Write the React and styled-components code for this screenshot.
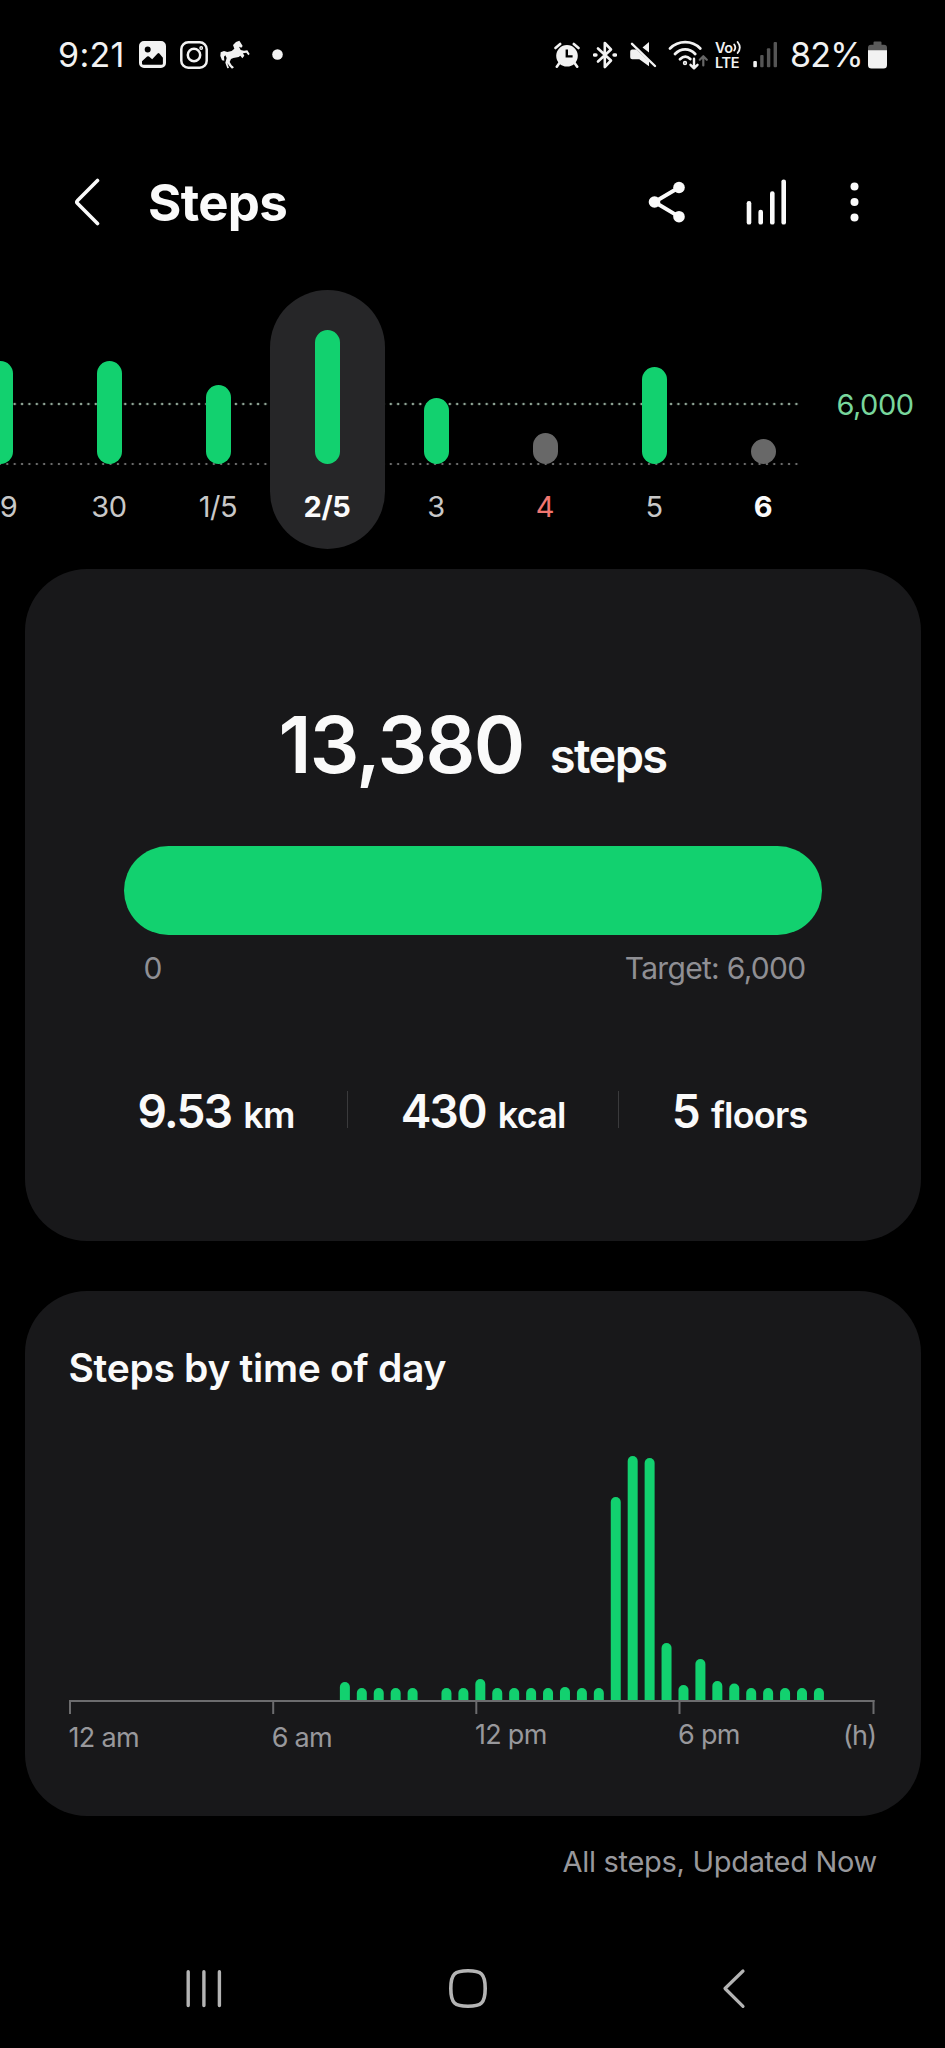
import React, { useState } from "react";
import styled, { createGlobalStyle } from "styled-components";

const GREEN = '#12d16f';

const DAYS = [
    { label: '29', height: 103 },
    { label: '30', height: 103 },
    { label: '1/5', height: 79 },
    { label: '2/5', height: 134.5 },
    { label: '3', height: 66.5 },
    { label: '4', height: 31, missed: true, holiday: true },
    { label: '5', height: 97 },
    { label: '6', height: 25, missed: true, today: true },
];

const STATS = [
    { value: '9.53', unit: 'km' },
    { value: '430', unit: 'kcal' },
    { value: '5', unit: 'floors' },
];

// one entry per half hour, starting at 8 am (slot 16)
const FIRST_SLOT = 16;
const SLOT_WIDTH = 16.93;
const SLOTS = [19, 13, 13, 13, 13, 0, 13, 13, 22, 13, 13, 13, 13, 14, 13, 13, 204, 245, 243, 58, 16, 42, 20, 17.5, 13, 13, 13, 13, 13];
const TICKS = [1, 204.2, 407.3, 610.5, 804.5];

function StatusBar() {
    return (
        <StatusContainer>
            <Clock>9:21</Clock>
            <Icon width="27" height="27" viewBox="0 0 27 27">
                <path fillRule="evenodd" d="M5 0H22a5 5 0 0 1 5 5V22a5 5 0 0 1-5 5H5a5 5 0 0 1-5-5V5a5 5 0 0 1 5-5ZM8.7 5.6a3 3 0 1 0 0 6 3 3 0 0 0 0-6ZM3 22.5a1.3 1.3 0 0 0 1.3 1.3H22.6a1.3 1.3 0 0 0 1.3-1.3V16.8L20.4 12.6a1.2 1.2 0 0 0-1.8 0L13.2 18.2 10 15.6a1.4 1.4 0 0 0-1.9 0L3 20.3Z" />
            </Icon>
            <Icon $left={14} width="28" height="28" viewBox="0 0 28 28" $line={2.5}>
                <rect x="1.3" y="1.3" width="25.4" height="25.4" rx="7" />
                <circle cx="14" cy="14" r="6.2" />
                <circle cx="21.2" cy="7" r="0.7" />
            </Icon>
            <Icon $left={12} width="30" height="30" viewBox="540 62 90 90">
                <path d="M598 64L602 70 608 80 604 85 597 82 602 92 612 94 622 93 629 104 625 108 619 100 609 102 613 109 607 117 601 109 596 113 580 116 573 119 569 128 575 138 582 144 576 148 568 140 562 131 567 146 562 147 556 130 560 116 556 108 552 112 553 124 546 123 541 110 542 99 552 95 562 98 575 95 583 88 579 77 588 68Z" />
            </Icon>
            <Icon $left={22} width="11" height="11" viewBox="0 0 11 11">
                <circle cx="5.5" cy="5.5" r="5.3" />
            </Icon>
            <StatusRight>
                <Icon width="26" height="26" viewBox="0 0 26 26">
                    <path fillRule="evenodd" d="M13 3a10.8 10.8 0 1 1 0 21.6A10.8 10.8 0 0 1 13 3ZM11.6 7.6V15.6H18.6V13.2H14V7.6Z" />
                    <path d="M5.8 20.5L2.8 24.7M20.2 20.5L23.2 24.7M1.5 6L6.2 2M24.5 6L19.8 2" stroke="#f2f2f2" strokeWidth="2.6" strokeLinecap="round" />
                </Icon>
                <Icon $left={13} width="24" height="28" viewBox="0 0 24 28" $line={2.6}>
                    <path d="M5 7.5L18 19.5 11.8 26V2L18 8.5 5 20.5" />
                    <path d="M1.5 14H3M21 14H22.5" strokeWidth="3.4" />
                </Icon>
                <Icon $left={12} width="28" height="27" viewBox="0 0 28 27">
                    <path d="M20 1V11.5L13.5 6.6ZM1.2 10.5a2 2 0 0 1 2-2H7.2L20 20.2V25.2L10.3 18.3H3.2a2 2 0 0 1-2-2Z" />
                    <path d="M3 2.8L26 25" stroke="#f2f2f2" strokeWidth="2.4" strokeLinecap="round" />
                </Icon>
                <Icon $left={11} width="40" height="30" viewBox="0 0 40 30" $line={2.8}>
                    <path d="M2 8.5C10.5 0 24 0 32.3 8.5M7 14C13 7.8 21.3 7.8 27.2 14M12 19.3C15.5 15.8 19 15.8 22.3 19" />
                    <circle cx="17" cy="23" r="0.8" />
                    <path d="M26 18.8V28M22.5 24.8L26 28.3 29.5 24.8" strokeWidth="2.4" />
                    <path d="M35.3 25.5V16.5M31.8 19.8L35.3 16.2 38.8 19.8" strokeWidth="2.2" stroke="#666" />
                </Icon>
                <Volte>
                    <div>
                        Vo
                        <Icon width="9" height="13" viewBox="0 0 9 13" $line={1.8}>
                            <path d="M1.2 3.4Q3.4 6.5 1.2 9.6M4.6 1Q9 6.5 4.6 12" />
                        </Icon>
                    </div>
                    <div>LTE</div>
                </Volte>
                <Icon $left={10} width="25" height="27" viewBox="0 0 25 27">
                    <rect x="0.3" y="20" width="3.6" height="6.3" rx="1" />
                    <g fill="#555">
                        <rect x="7.2" y="14" width="3.4" height="12.3" rx="1" />
                        <rect x="13.9" y="7.3" width="3.4" height="19" rx="1" />
                        <rect x="20.6" y="1" width="3.4" height="25.3" rx="1" />
                    </g>
                </Icon>
                <Battery>82%</Battery>
                <Icon width="19" height="28" viewBox="0 0 19 28">
                    <path d="M5.5 1.5Q5.5 .5 6.5 .5H12.5Q13.5 .5 13.5 1.5V3.8H16a3 3 0 0 1 3 3V10H0V6.8a3 3 0 0 1 3-3H5.5Z" fill="#5a5a5a" />
                    <path d="M0 9.3H19V24a3.5 3.5 0 0 1-3.5 3.5H3.5A3.5 3.5 0 0 1 0 24Z" />
                </Icon>
            </StatusRight>
        </StatusContainer>
    )
}

function WeekChart() {
    const [selected, setSelected] = useState('2/5');

    return (
        <WeekContainer>
            <WeekPlot>
                {DAYS.map((day) => (
                    <Day key={day.label} role='button' $selected={day.label === selected} onClick={() => setSelected(day.label)}>
                        <DayBarArea>
                            <DayBar $missed={day.missed} style={{ height: day.height }} />
                        </DayBarArea>
                        <DayLabel $holiday={day.holiday} $strong={day.today || day.label === selected}>{day.label}</DayLabel>
                    </Day>
                ))}
            </WeekPlot>
            <TargetLabel>6,000</TargetLabel>
        </WeekContainer>
    )
}

function DayChart() {
    return (
        <>
            <svg width="807" height="266" viewBox="0 0 807 266">
                {SLOTS.map((h, i) => h > 0 && (
                    <path
                        key={i}
                        d={`M${(FIRST_SLOT + i) * SLOT_WIDTH} 251V${256 - h}a5 5 0 0 1 10 0V251Z`}
                        fill={GREEN}
                    />
                ))}
                <rect x="0" y="250" width="805.5" height="2" fill="#6c6c6e" />
                {TICKS.map((x) => <rect key={x} x={x - 1} y="250" width="2" height="14" fill="#6c6c6e" />)}
            </svg>
            <HourLabels>
                <HourLabel $drop={2.5}>12 am</HourLabel>
                <HourLabel $drop={2.5}>6 am</HourLabel>
                <HourLabel>12 pm</HourLabel>
                <HourLabel>6 pm</HourLabel>
                <HourLabel $drop={1}>(h)</HourLabel>
            </HourLabels>
        </>
    )
}

function App() {
    return (
        <Screen>
            <GlobalStyle />
            <StatusBar />
            <Header>
                <Icon width="26" height="48" viewBox="0 0 26 48" $line={3.6}>
                    <path d="M23.5 2.5L3.6 22.4Q2 24 3.6 25.6L23.5 45.5" />
                </Icon>
                <Title>Steps</Title>
                <Icon width="38" height="42" viewBox="0 0 38 42">
                    <path d="M31 6.5L6.5 21 31 35.7" fill="none" stroke="#fafafa" strokeWidth="3.8" />
                    <circle cx="6.5" cy="21" r="5.8" />
                    <circle cx="31" cy="6.5" r="5.8" />
                    <circle cx="31" cy="35.7" r="5.8" />
                </Icon>
                <Icon $left={60} width="40" height="46" viewBox="0 0 40 46">
                    <rect x="0.7" y="22" width="4.6" height="23.6" rx="2.2" />
                    <rect x="12.4" y="30.7" width="4.6" height="14.9" rx="2.2" />
                    <rect x="24" y="12.3" width="4.6" height="33.3" rx="2.2" />
                    <rect x="35.4" y="0.4" width="4.6" height="45.2" rx="2.2" />
                </Icon>
                <Icon $left={64} width="9" height="42" viewBox="0 0 9 42">
                    <circle cx="4.5" cy="5.4" r="4" />
                    <circle cx="4.5" cy="21" r="4" />
                    <circle cx="4.5" cy="36.6" r="4" />
                </Icon>
            </Header>
            <WeekChart />
            <SummaryCard>
                <Headline>
                    <HeadlineValue>13,380</HeadlineValue>
                    <HeadlineUnit>steps</HeadlineUnit>
                </Headline>
                <ProgressBar />
                <ProgressLabels>
                    <span>0</span>
                    <span>Target: 6,000</span>
                </ProgressLabels>
                <StatsRow>
                    {STATS.map((stat) => (
                        <Stat key={stat.unit}>
                            <StatValue>{stat.value}</StatValue>
                            <StatUnit>{stat.unit}</StatUnit>
                        </Stat>
                    ))}
                </StatsRow>
            </SummaryCard>
            <TimeCard>
                <CardTitle>Steps by time of day</CardTitle>
                <DayChart />
            </TimeCard>
            <UpdatedText>All steps, Updated Now</UpdatedText>
            <NavBar>
                <Icon width="36" height="41" viewBox="0 0 36 41" $line={3.4}>
                    <path d="M2.2 3.7V37.5M17.9 3.7V37.5M33.4 3.7V37.5" />
                </Icon>
                <Icon $left={225} width="42" height="41" viewBox="0 0 42 41" $line={3.6}>
                    <path d="M21 2.8C34 2.8 38.2 5.5 38.2 20.5S34 38.2 21 38.2 3.8 35.5 3.8 20.5 8 2.8 21 2.8Z" />
                </Icon>
                <Icon $left={233} width="24" height="41" viewBox="0 0 24 41" $line={3.2}>
                    <path d="M21 3L3 20.5 21 38.3" />
                </Icon>
            </NavBar>
        </Screen>
    )
}

const GlobalStyle = createGlobalStyle`
    body {
        margin: 0;
        background-color: #000;
    }
`

const Screen = styled.div`
    width: 945px;
    height: 2048px;
    display: flex;
    flex-direction: column;
    overflow: hidden;
    background-color: #000;
    color: #fafafa;
    font-family: Inter, "Liberation Sans", sans-serif;
    white-space: nowrap;

    * {
        box-sizing: border-box;
    }
`

const Icon = styled.svg`
    display: block;
    flex-shrink: 0;
    margin-left: ${({ $left }) => $left || 0}px;
    fill: ${({ $line }) => $line ? 'none' : 'currentColor'};
    stroke: ${({ $line }) => $line ? 'currentColor' : 'none'};
    stroke-width: ${({ $line }) => $line || 0};
    stroke-linecap: round;
    stroke-linejoin: round;
`

const StatusContainer = styled.div`
    display: flex;
    align-items: center;
    height: 109px;
    padding: 0 58px;
    color: #f2f2f2;
`

const Clock = styled.div`
    width: 81px;
    font-size: 34px;
    letter-spacing: 0.3px;
`

const StatusRight = styled.div`
    display: flex;
    align-items: center;
    margin-left: auto;
`

const Volte = styled.div`
    width: 28px;
    margin-left: 7px;
    font-size: 14.5px;
    font-weight: 600;
    line-height: 15px;
    letter-spacing: -0.4px;

    > div {
        display: flex;
        align-items: center;
    }
`

const Battery = styled.div`
    width: 78px;
    margin-left: 12px;
    font-size: 34px;
    letter-spacing: -0.7px;
`

const Header = styled.div`
    display: flex;
    align-items: center;
    height: 181px;
    padding: 5px 86px 0 74px;
`

const Title = styled.div`
    flex: 1;
    margin-left: 48px;
    font-size: 51px;
    font-weight: 700;
    letter-spacing: -0.7px;
`

const WeekContainer = styled.div`
    display: flex;
    height: 259px;
`

const WeekPlot = styled.div`
    display: flex;
    flex-shrink: 0;
    width: 799px;
    background-image:
        radial-gradient(circle, #8fa596 0.8px, transparent 1.7px),
        radial-gradient(circle, #6a6a6a 0.7px, transparent 1.6px);
    background-size: 7.383px 4px;
    background-position: 3.6px 112px, 3.6px 172px;
    background-repeat: repeat-x;

    > :first-child {
        margin-left: -54.5px;
    }
`

const Day = styled.div`
    display: flex;
    flex-direction: column;
    align-items: center;
    flex-shrink: 0;
    width: ${({ $selected }) => $selected ? 115 : 109}px;
    margin: ${({ $selected }) => $selected ? '0 -3px' : '0'};
    border-radius: 58px;
    background-color: ${({ $selected }) => $selected ? '#262628' : 'transparent'};
`

const DayBarArea = styled.div`
    display: flex;
    align-items: flex-end;
    height: 174px;
`

const DayBar = styled.div`
    width: 25px;
    border-radius: 12.5px;
    background-color: ${({ $missed }) => $missed ? '#686868' : GREEN};
`

const DayLabel = styled.div`
    margin-top: 28px;
    font-size: 29px;
    line-height: 30px;
    letter-spacing: -0.4px;
    font-weight: ${({ $strong }) => $strong ? 700 : 400};
    color: ${({ $holiday, $strong }) => $holiday ? '#f07670' : $strong ? '#fafafa' : '#c8c8c8'};
`

const TargetLabel = styled.div`
    margin: 100px 0 0 37.5px;
    font-size: 29px;
    line-height: 30px;
    letter-spacing: -0.5px;
    color: #78d69c;
`

const Card = styled.div`
    flex-shrink: 0;
    margin: 0 24.5px;
    border-radius: 62px;
    background-color: #18181a;
`

const SummaryCard = styled(Card)`
    height: 672px;
    margin-top: 20px;
    padding: 136px 99px 0;
`

const Headline = styled.div`
    display: flex;
    justify-content: center;
    align-items: baseline;
    gap: 26px;
    height: 80px;
    font-weight: 600;
    line-height: 80px;
`

const HeadlineValue = styled.div`
    font-size: 78px;
    letter-spacing: -1.6px;
`

const HeadlineUnit = styled.div`
    font-size: 47px;
    letter-spacing: -1.6px;
`

const ProgressBar = styled.div`
    height: 89px;
    margin-top: 61px;
    border-radius: 45px;
    background-color: ${GREEN};
`

const ProgressLabels = styled.div`
    display: flex;
    justify-content: space-between;
    margin-top: 18px;
    padding: 0 16px 0 20px;
    font-size: 30px;
    line-height: 30px;
    letter-spacing: -0.7px;
    color: #8f8f94;
`

const StatsRow = styled.div`
    display: flex;
    justify-content: center;
    height: 46px;
    margin-top: 105px;
`

const Stat = styled.div`
    position: relative;
    display: flex;
    align-items: baseline;
    gap: 12px;
    font-weight: 600;
    line-height: 46px;

    & + & {
        margin-left: 106px;
    }

    & + &::before {
        content: '';
        position: absolute;
        top: 3px;
        left: -54px;
        width: 1px;
        height: 37px;
        background-color: #3a3a3c;
    }
`

const StatValue = styled.div`
    font-size: 46px;
    letter-spacing: -1.7px;
`

const StatUnit = styled.div`
    font-size: 36px;
    letter-spacing: -0.8px;
`

const TimeCard = styled(Card)`
    height: 525px;
    margin-top: 50px;
    padding: 55px 44px 0;

    > svg {
        display: block;
        margin-top: 60px;
    }
`

const CardTitle = styled.div`
    font-size: 39px;
    font-weight: 600;
    line-height: 44px;
    letter-spacing: -0.3px;
`

const HourLabels = styled.div`
    display: grid;
    grid-template-columns: repeat(3, 203.2px) 1fr auto;
    margin-top: 5px;
`

const HourLabel = styled.div`
    padding-top: ${({ $drop }) => $drop || 0}px;
    font-size: 27px;
    line-height: 28px;
    letter-spacing: -0.7px;
    color: #98989c;
`

const UpdatedText = styled.div`
    margin-top: 31px;
    padding-right: 68px;
    font-size: 29px;
    line-height: 30px;
    letter-spacing: -0.3px;
    text-align: right;
    color: #98989c;
`

const NavBar = styled.div`
    display: flex;
    margin-top: 91px;
    padding-left: 186px;
    color: #b4b4b4;
`

export default App;
